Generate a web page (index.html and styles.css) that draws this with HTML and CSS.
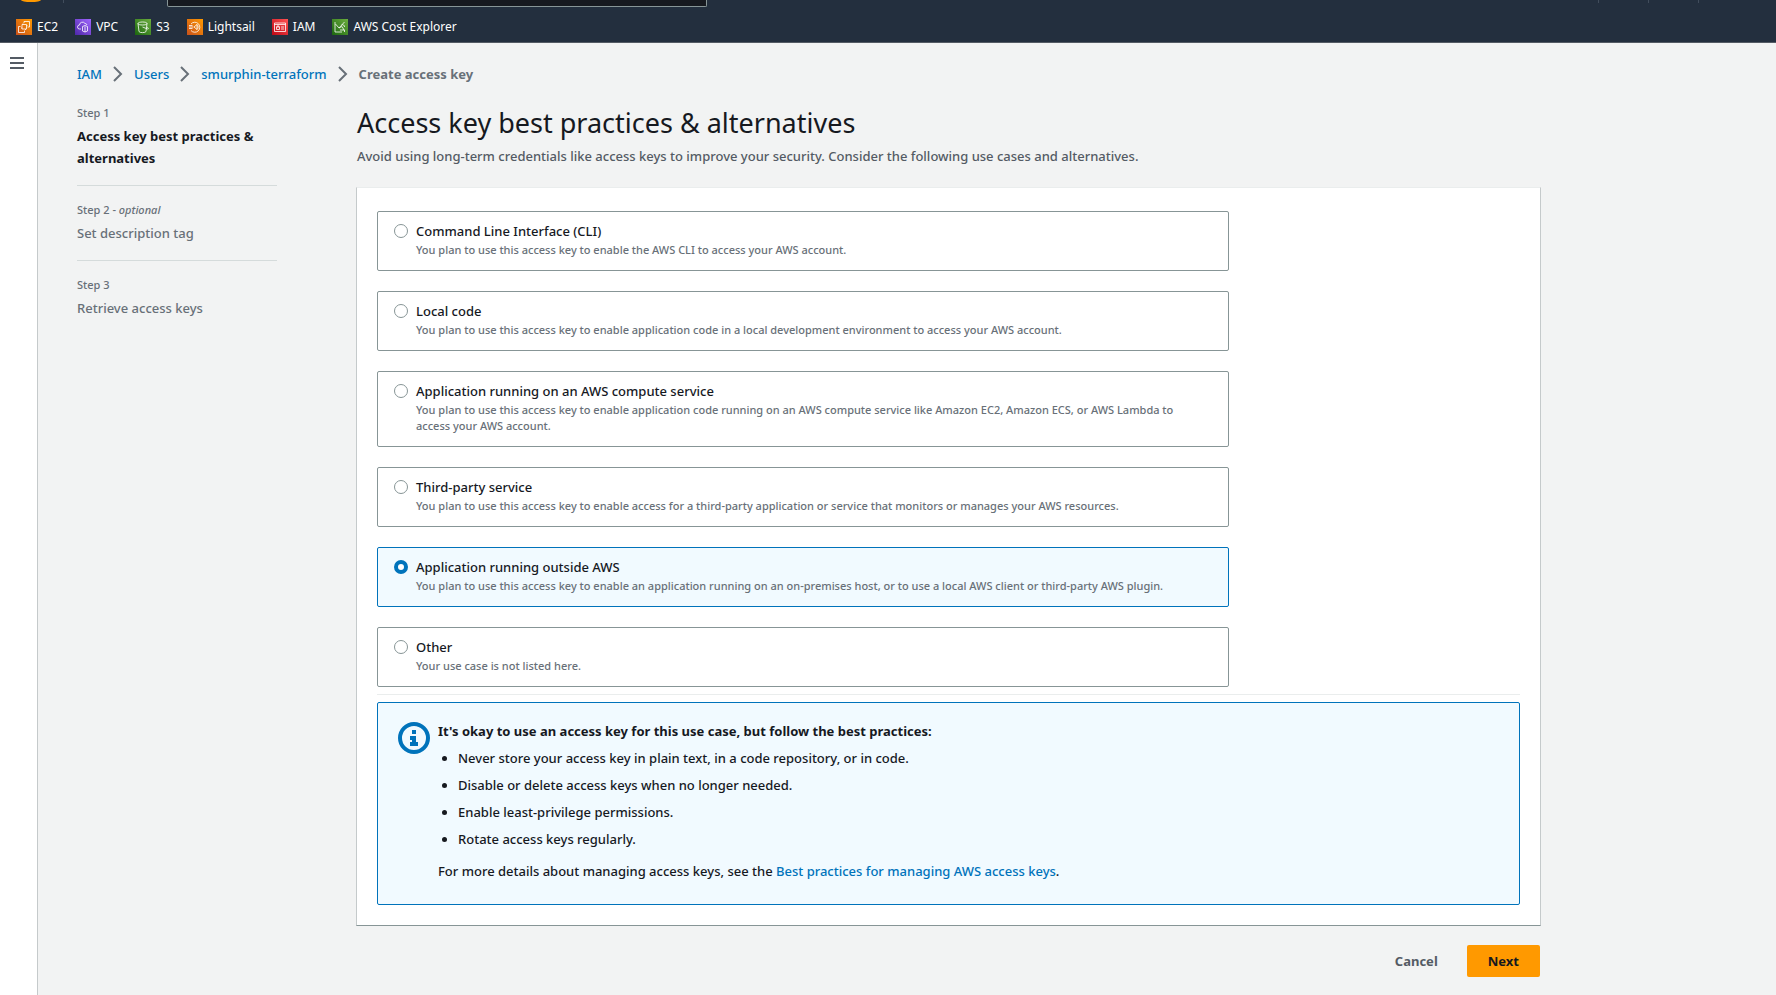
FILE: index.html
```html
<!DOCTYPE html>
<html lang="en">
<head>
    <meta charset="UTF-8">
    <meta name="viewport" content="width=device-width, initial-scale=1.0">
    <title>Create access key | IAM</title>
    <link rel="stylesheet" href="styles.css">
</head>
<body>

    <header class="topbar">
        <div class="topbar-main">
            <span class="logo"></span>
            <span class="divider"></span>
            <input class="search" type="search" aria-label="Search">
            <div class="topbar-tools">
                <span class="divider"></span>
                <span class="divider"></span>
                <span class="divider"></span>
            </div>
        </div>
        <nav class="favorites" aria-label="Favorites">
            <a href="#">
                <svg class="service orange" viewBox="0 0 16 16"><path d="M6 5.5h4.5V10H6zM4.5 7.5h-2v6h6v-2M8 4V2.5h5.5V8h-2M7 4.5v1M9.5 10v1M5 9h1M10.5 6.5h1"/></svg>
                EC2
            </a>
            <a href="#">
                <svg class="service purple" viewBox="0 0 16 16"><path d="M6 10H4.5a2 2 0 0 1 0-4 3 3 0 0 1 5.5-1.5 2 2 0 0 1 2 1.5M7.5 7.5L10 6.5l2.5 1v4.5L10 13l-2.5-1zM10 7.5V13"/></svg>
                VPC
            </a>
            <a href="#">
                <svg class="service green" viewBox="0 0 16 16"><path d="M3 4.5c0-2 9-2 9 0s-9 2-9 0l1 8c.5 1.5 6.5 1.5 7 0l1-8M7.5 8l5 2c1.5 0 1-1-.5-2"/></svg>
                S3
            </a>
            <a href="#">
                <svg class="service orange" viewBox="0 0 16 16"><path d="M4 5a5 5 0 1 1 0 6.5M2 6.5h3.5M2 8h4.5M2 9.5h3.5M7 8l3-2.5v5zM10 5.5c1.5 1 1.5 4 0 5"/></svg>
                Lightsail
            </a>
            <a href="#">
                <svg class="service red" viewBox="0 0 16 16"><path d="M2.5 4h11v8.5h-11zM2.5 5.5h11M4.5 8h3v2.5h-3zM5 8V7h2v1M9 8h3M9 10h3"/></svg>
                IAM
            </a>
            <a href="#">
                <svg class="service green" viewBox="0 0 16 16"><path d="M3 3v10h7M3.5 5L7 9l5.5-6M7 9l3-1.5 2 3.5M9.5 6a2 2 0 0 1 3 2M8 11h4.5v2"/></svg>
                AWS Cost Explorer
            </a>
        </nav>
    </header>

    <div class="layout">
        <aside class="side">
            <button class="menu" type="button" aria-label="Open navigation">
                <svg viewBox="0 0 14 12"><path d="M0 1h14M0 6h14M0 11h14"/></svg>
            </button>
        </aside>

        <main class="content">
            <nav class="breadcrumbs" aria-label="Breadcrumbs">
                <a href="#">IAM</a>
                <svg viewBox="0 0 10 16"><path d="M1 1l7 7-7 7"/></svg>
                <a href="#">Users</a>
                <svg viewBox="0 0 10 16"><path d="M1 1l7 7-7 7"/></svg>
                <a href="#">smurphin-terraform</a>
                <svg viewBox="0 0 10 16"><path d="M1 1l7 7-7 7"/></svg>
                <span>Create access key</span>
            </nav>

            <div class="wizard">
                <ol class="steps">
                    <li class="active">
                        <small>Step 1</small>
                        <span>Access key best practices &amp; alternatives</span>
                    </li>
                    <li>
                        <small>Step 2 - <em>optional</em></small>
                        <span>Set description tag</span>
                    </li>
                    <li>
                        <small>Step 3</small>
                        <span>Retrieve access keys</span>
                    </li>
                </ol>

                <form class="step-form">
                    <h1>Access key best practices &amp; alternatives</h1>
                    <p class="intro">Avoid using long-term credentials like access keys to improve your security. Consider the following use cases and alternatives.</p>

                    <section class="container">
                        <div class="tiles">
                            <label class="tile">
                                <input type="radio" name="usecase">
                                <span class="tile-text">
                                    <span>Command Line Interface (CLI)</span>
                                    <small>You plan to use this access key to enable the AWS CLI to access your AWS account.</small>
                                </span>
                            </label>
                            <label class="tile">
                                <input type="radio" name="usecase">
                                <span class="tile-text">
                                    <span>Local code</span>
                                    <small>You plan to use this access key to enable application code in a local development environment to access your AWS account.</small>
                                </span>
                            </label>
                            <label class="tile">
                                <input type="radio" name="usecase">
                                <span class="tile-text">
                                    <span>Application running on an AWS compute service</span>
                                    <small>You plan to use this access key to enable application code running on an AWS compute service like Amazon EC2, Amazon ECS, or AWS Lambda to access your AWS account.</small>
                                </span>
                            </label>
                            <label class="tile">
                                <input type="radio" name="usecase">
                                <span class="tile-text">
                                    <span>Third-party service</span>
                                    <small>You plan to use this access key to enable access for a third-party application or service that monitors or manages your AWS resources.</small>
                                </span>
                            </label>
                            <label class="tile selected">
                                <input type="radio" name="usecase" checked>
                                <span class="tile-text">
                                    <span>Application running outside AWS</span>
                                    <small>You plan to use this access key to enable an application running on an on-premises host, or to use a local AWS client or third-party AWS plugin.</small>
                                </span>
                            </label>
                            <label class="tile">
                                <input type="radio" name="usecase">
                                <span class="tile-text">
                                    <span>Other</span>
                                    <small>Your use case is not listed here.</small>
                                </span>
                            </label>
                        </div>

                        <hr>

                        <div class="alert">
                            <svg viewBox="0 0 32 32">
                                <circle cx="16" cy="16" r="14"/>
                                <path d="M14 8h4v4h-4zM12 14h6v6h2v4h-8v-4h2v-2h-2z"/>
                            </svg>
                            <div>
                                <strong>It's okay to use an access key for this use case, but follow the best practices:</strong>
                                <ul>
                                    <li>Never store your access key in plain text, in a code repository, or in code.</li>
                                    <li>Disable or delete access keys when no longer needed.</li>
                                    <li>Enable least-privilege permissions.</li>
                                    <li>Rotate access keys regularly.</li>
                                </ul>
                                <p>For more details about managing access keys, see the <a href="#">Best practices for managing AWS access keys</a>.</p>
                            </div>
                        </div>
                    </section>

                    <div class="actions">
                        <button class="cancel" type="button">Cancel</button>
                        <button class="next" type="submit">Next</button>
                    </div>
                </form>
            </div>
        </main>
    </div>

</body>
</html>
```

FILE: styles.css
```css
* {
    box-sizing: border-box;
}
body {
    margin: 0;
    min-height: 100vh;
    display: flex;
    flex-direction: column;
    font-family: "Noto Sans", "Open Sans", sans-serif;
    font-size: 13px;
    font-weight: 500;
    line-height: 22px;
    color: #16191f;
    background-color: #f2f3f3;
}
a {
    color: #0073bb;
    text-decoration: none;
}
a:hover {
    text-decoration: underline;
}
button {
    font: inherit;
    font-weight: bold;
    border: none;
    cursor: pointer;
}
small {
    font-size: 11px;
    line-height: 16px;
    color: #687078;
}

/* Top bar */
.topbar {
    background-color: #232f3e;
    border-bottom: 1px solid #545b64;
}
.topbar-main {
    display: flex;
    align-items: flex-start;
    height: 7px;
    padding-left: 21px;
}
.logo {
    width: 20px;
    height: 2px;
    background-color: #ff9900;
    border-radius: 0 0 10px 10px / 0 0 2px 2px;
}
.divider {
    width: 1px;
    height: 3px;
    background-color: #414d5c;
}
.logo + .divider {
    margin: 0 103px 0 22px;
}
.search {
    width: 540px;
    height: 7px;
    padding: 0;
    background-color: #16191f;
    border: 1px solid #879596;
    border-top: none;
    border-radius: 0 0 2px 2px;
}
.topbar-tools {
    display: flex;
    gap: 49px;
    margin-left: auto;
    padding-right: 77px;
}
.favorites {
    display: flex;
    gap: 17px;
    height: 35px;
    padding: 9px 16px;
}
.favorites a {
    display: flex;
    align-items: center;
    gap: 5px;
    height: 22px;
    font-size: 12px;
    font-weight: 400;
    color: #fff;
}
.service {
    width: 16px;
    height: 16px;
    fill: none;
    stroke: #fff;
    stroke-width: 0.8;
}
.orange {
    background: linear-gradient(45deg, #c8511b, #ff9900);
}
.purple {
    background: linear-gradient(45deg, #4d27a8, #a166ff);
}
.green {
    background: linear-gradient(45deg, #1b660f, #6cae3e);
}
.red {
    background: linear-gradient(45deg, #bd0816, #ff5252);
}

/* Page layout */
.layout {
    display: flex;
    flex: 1;
}
.side {
    flex: none;
    width: 38px;
    background-color: #fff;
    border-right: 1px solid #c5cacb;
}
.menu {
    display: block;
    padding: 14px 10px;
    background: none;
}
.menu svg {
    display: block;
    width: 14px;
    height: 12px;
    stroke: #545b64;
    stroke-width: 2;
}
.content {
    flex: 1;
    padding: 20px 39px 18px;
}
.breadcrumbs {
    display: flex;
    align-items: center;
    gap: 11px;
    margin-bottom: 20px;
}
.breadcrumbs svg {
    width: 10px;
    height: 16px;
    fill: none;
    stroke: #687078;
    stroke-width: 2;
}
.breadcrumbs span {
    font-weight: bold;
    color: #687078;
}
.wizard {
    display: grid;
    grid-template-columns: 200px minmax(0, 1fr);
    gap: 80px;
    max-width: 1463px;
}

/* Steps */
.steps {
    margin: 0;
    padding: 0;
    list-style: none;
}
.steps li {
    display: flex;
    flex-direction: column;
    gap: 4px;
    padding-bottom: 16px;
    color: #687078;
}
.steps li + li {
    padding-top: 16px;
    border-top: 1px solid #d5dbdb;
}
.steps .active span {
    font-weight: bold;
    color: #16191f;
}

/* Form */
h1 {
    margin: 0;
    font-size: 27px;
    font-weight: 400;
    line-height: 36px;
}
.intro {
    margin: 4px 0 20px;
    color: #545b64;
}
.container {
    margin: 0 -1px;
    padding: 23px 20px 20px;
    background-color: #fff;
    border: 1px solid #c5cacb;
    border-top-color: #eaeded;
    border-bottom-color: #879596;
}
.tiles {
    display: grid;
    gap: 20px;
    width: calc(75% - 5px);
}
.tile {
    display: flex;
    gap: 8px;
    padding: 8px 20px 12px 16px;
    border: 1px solid #879596;
    border-radius: 2px;
}
.tile.selected {
    background-color: #f1faff;
    border-color: #0073bb;
}
.tile input {
    appearance: none;
    flex: none;
    width: 14px;
    height: 14px;
    margin: 4px 0;
    background-color: #fff;
    border: 1px solid #879596;
    border-radius: 50%;
}
.tile input:checked {
    border: 4px solid #0073bb;
}
.tile-text {
    display: flex;
    flex-direction: column;
}
hr {
    margin: 7px 0;
    border: none;
    border-top: 1px solid #eaeded;
}
.alert {
    display: flex;
    gap: 8px;
    padding: 17px 20px 22px;
    background-color: #f1faff;
    border: 1px solid #0073bb;
    border-radius: 2px;
}
.alert svg {
    flex: none;
    width: 32px;
    height: 32px;
    margin-top: 2px;
    fill: #0073bb;
}
.alert circle {
    fill: none;
    stroke: #0073bb;
    stroke-width: 4;
}
.alert ul {
    display: grid;
    gap: 5px;
    margin: 5px 0 10px;
    padding-left: 20px;
}
.alert p {
    margin: 0;
}
.actions {
    display: flex;
    justify-content: flex-end;
    gap: 8px;
    margin-top: 19px;
}
.actions button {
    padding: 5px 21px;
    border-radius: 2px;
}
.cancel {
    color: #545b64;
    background: none;
}
.next {
    color: #16191f;
    background-color: #ff9900;
}
```
